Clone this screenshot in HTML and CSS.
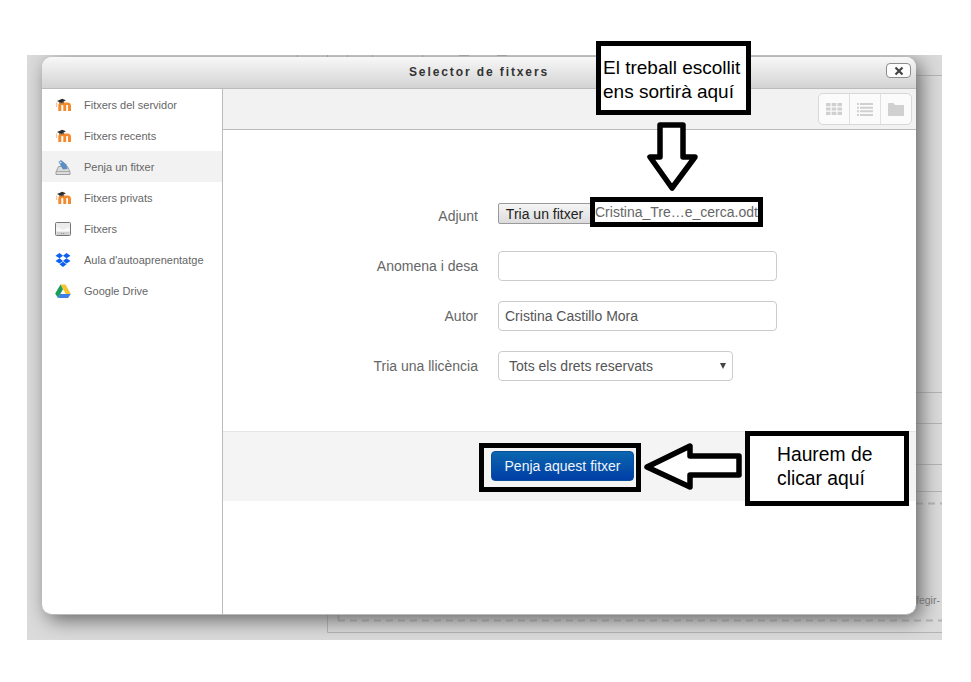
FILE: index.html
```html
<!DOCTYPE html>
<html lang="ca">
<head>
<meta charset="utf-8">
<title>Selector de fitxers</title>
<link rel="stylesheet" href="styles.css">
</head>
<body>
<svg width="0" height="0" class="defs" aria-hidden="true">
  <defs>
    <symbol id="moodle" viewBox="0 0 16 16">
      <path d="M1 5.500h1.200v4.500H1z" fill="#f9c49a"/>
      <path d="M3.300 14V8.500C3.300 6.500 4.800 5.500 6.500 5.500H12.700C14.900 5.500 16 7 16 9V14H13V9.200C13 8.400 12.700 8.100 12 8.100H11.200V14H8.300V9C8.300 8.300 8 8.100 7.300 8.100 6.600 8.100 6.300 8.400 6.300 9.200V14Z" fill="#f58a2c"/>
      <path d="M2 4 7.200 1.700 10.800 3.300 6.500 6 4 5.200 2.500 4.300z" fill="#2e2e2e"/>
      <path d="M4 5.300 6.500 6.200 8.800 4.800 8.800 6.300H4.300z" fill="#4a4a4a"/>
    </symbol>
  </defs>
</svg>
<div class="page">
  <div class="stage">
    <svg class="backdrop" viewBox="0 0 915 585" width="915" height="585" aria-hidden="true">
      <g stroke="#b4b4b4" fill="none">
        <path d="M889 20.500H915M889 337.500H915M889 368.500H915M889 409.500H915M889 436.500H915"/>
        <path d="M300.500 555V577.500H915"/>
        <path d="M311.500 555V565.500" stroke-width="2"/>
        <path d="M889 448.500H915M311 565.500H915" stroke-width="2" stroke-dasharray="7 5"/>
        <path d="M270.500 0V2M300.500 0V2M320.500 0V2M345.500 0V2M395.500 0V2M432 .5H442M470 .5H480M590 .5H610"/>
      </g>
    </svg>
    <span class="peek">fegir-</span>
    <section class="dialog">
      <header class="dialog-head">
        <h1 class="dialog-title">Selector de fitxers</h1>
        <button class="close" type="button" aria-label="Tanca">
          <svg viewBox="0 0 10 10" width="10" height="10"><path d="M1.500 1.500 8.500 8.500M8.500 1.500 1.500 8.500" stroke="#444" stroke-width="2.200" fill="none"/></svg>
        </button>
      </header>
      <div class="dialog-body">
        <nav class="side">
          <a class="side-item"><svg class="ico"><use href="#moodle"/></svg>Fitxers del servidor</a>
          <a class="side-item"><svg class="ico"><use href="#moodle"/></svg>Fitxers recents</a>
          <a class="side-item is-active">
            <svg class="ico" viewBox="0 0 16 16">
              <path d="M3.500 7.500 1 13v2.500h14V13l-2.500-5.500z" fill="#dcdcdc" stroke="#8d8d8d" stroke-width=".8"/>
              <path d="M1.500 12.500h13" stroke="#a8a8a8" stroke-width="1"/>
              <path d="M3.500 3 6 1l5.500 4.500 1 4.500-4.500.5z" fill="#5a8ec4"/>
              <circle cx="5.500" cy="3.500" r="1" fill="#dbe8f5"/>
            </svg>Penja un fitxer</a>
          <a class="side-item"><svg class="ico"><use href="#moodle"/></svg>Fitxers privats</a>
          <a class="side-item">
            <svg class="ico" viewBox="0 0 16 16">
              <rect x=".5" y="1.500" width="15" height="13" rx="1" fill="#ececec" stroke="#777"/>
              <path d="M1.500 6 8 9 14.500 6v4h-13z" fill="#fafafa"/>
              <path d="M1.500 11h13v3h-13z" fill="#cfcfcf"/>
              <path d="M6 12.500h4" stroke="#999" stroke-dasharray="1 1"/>
            </svg>Fitxers</a>
          <a class="side-item">
            <svg class="ico" viewBox="0 0 16 16">
              <path d="M4.500 1 .5 3.700 4.500 6.300 8 3.700zM11.500 1 8 3.700l3.500 2.600 4-2.600zM.5 9 4.500 11.500 8 9 4.500 6.300zM11.500 6.300 8 9l3.500 2.500 4-2.500zM4.500 12.300 8 15l3.500-2.700L8 9.800z" fill="#0d5ff0"/>
            </svg>Aula d'autoaprenentatge</a>
          <a class="side-item">
            <svg class="ico" viewBox="0 0 16 16">
              <path d="M5.500 1.500h5L15.800 11h-5z" fill="#f7c32d"/>
              <path d="M5.500 1.500 8 6.200 3 15 .2 10.500z" fill="#1c9e5a"/>
              <path d="M5 11h10.800L13 15H3z" fill="#3f7fe8"/>
            </svg>Google Drive</a>
        </nav>
        <main class="pane">
          <div class="toolbar">
            <div class="views">
              <span class="view">
                <svg viewBox="0 0 16 14" width="16" height="14"><path d="M0 1h4.500v3.200H0zM5.700 1h4.600v3.200H5.700zM11.500 1H16v3.200h-4.500zM0 5.400h4.500v3.200H0zM5.700 5.400h4.600v3.200H5.700zM11.500 5.400H16v3.200h-4.500zM0 9.800h4.500V13H0zM5.700 9.800h4.600V13H5.700zM11.500 9.800H16V13h-4.500z" fill="#d0d0d0"/></svg>
              </span>
              <span class="view">
                <svg viewBox="0 0 16 14" width="16" height="14"><path d="M0 1h2v2H0zM3 1h13v2H3zM0 4.700h2v2H0zM3 4.700h13v2H3zM0 8.300h2v2H0zM3 8.300h13v2H3zM0 12h2v2H0zM3 12h13v2H3z" fill="#d0d0d0"/></svg>
              </span>
              <span class="view">
                <svg viewBox="0 0 16 14" width="16" height="14"><path d="M0 2c0-.6.400-1 1-1h4.500l1.500 2h8c.6 0 1 .4 1 1v9c0 .6-.4 1-1 1H1c-.6 0-1-.4-1-1z" fill="#d0d0d0"/></svg>
              </span>
            </div>
          </div>
          <form class="form">
            <label class="lbl lbl-file">Adjunt</label>
            <div class="file-row"><button class="file-btn" type="button">Tria un fitxer</button></div>
            <label class="lbl">Anomena i desa</label>
            <input class="field" type="text">
            <label class="lbl">Autor</label>
            <input class="field" type="text" value="Cristina Castillo Mora">
            <label class="lbl">Tria una llicència</label>
            <div class="choice-wrap"><select class="choice"><option>Tots els drets reservats</option></select></div>
          </form>
          <div class="foot">
            <button class="submit" type="button">Penja aquest fitxer</button>
          </div>
        </main>
      </div>
    </section>
  </div>

  <div class="note note-top">El treball escollit<br>ens sortirà aquí</div>
  <div class="note note-file">Cristina_Tre…e_cerca.odt</div>
  <div class="note note-submit"></div>
  <div class="note note-click">Haurem de<br>clicar aquí</div>
  <svg class="arrows" viewBox="0 0 971 682" width="971" height="682" aria-hidden="true">
    <path d="M660 125H683V157H695L672 188 650 157H660z" fill="#fff" stroke="#000" stroke-width="5.500" stroke-linejoin="round"/>
    <path d="M647 467 690 446V456H739V475H690V487z" fill="#fff" stroke="#000" stroke-width="5.500" stroke-linejoin="round"/>
  </svg>
</div>
</body>
</html>
```
FILE: styles.css
```css
* { box-sizing: border-box; }
html, body { margin: 0; padding: 0; background: #fff; }
body { font-family: "Liberation Sans", Arial, sans-serif; color: #555; overflow: hidden; }
.defs { position: absolute; }
.page { position: relative; width: 971px; height: 682px; padding: 55px 29px 42px 27px; }

.stage { position: relative; isolation: isolate; width: 915px; height: 585px; background: #dbdbdb; overflow: hidden; }
.backdrop { position: absolute; left: 0; top: 0; }
.peek { position: absolute; left: 889px; top: 539px; font-size: 10.500px; color: #777; }

.dialog {
  position: absolute; left: 15px; top: 2px; width: 874px; height: 558px;
  display: flex; flex-direction: column;
  background: #fff; border-radius: 10px;
  box-shadow: 5px 5px 20px 0 #666;
  border-bottom: 1px solid #bbb;
  z-index: 1;
}
.dialog-head {
  position: relative; flex: none; height: 32px;
  display: flex; align-items: center; justify-content: center;
  border-radius: 10px 10px 0 0;
  border-bottom: 1px solid #bbb;
  background: linear-gradient(#f8f8f8, #d3d3d3);
}
.dialog-title { margin: 0; font-size: 12px; font-weight: bold; letter-spacing: 1.9px; color: #333; padding-bottom: 2px; }
.close {
  position: absolute; right: 5px; top: 6px; width: 25px; height: 15px; padding: 0;
  display: flex; align-items: center; justify-content: center;
  background: #fdfdfd; border: 1px solid #8c8c8c; border-radius: 4px;
}

.dialog-body { flex: 1; display: flex; min-height: 0; }
.side { flex: none; width: 181px; border-right: 1px solid #bbb; }
.side-item { display: flex; align-items: center; gap: 13px; height: 31px; padding: 0 0 0 13px; font-size: 11px; color: #666; }
.side-item.is-active { background: #f2f2f2; }
.ico { width: 16px; height: 16px; flex: none; }

.pane { flex: 1; min-width: 0; display: flex; flex-direction: column; }
.toolbar { flex: none; height: 41px; padding: 4px 4px 0 0; display: flex; justify-content: flex-end; align-items: flex-start; background: #f2f2f2; border-bottom: 1px solid #bbb; }
.views { display: flex; width: 94px; height: 32px; background: #fbfbfb; border: 1px solid #d8d8d8; border-radius: 5px; }
.view { flex: 1; display: flex; align-items: center; justify-content: center; border-left: 1px solid #e0e0e0; }
.view:first-child { border-left: 0; }

.form {
  display: grid; grid-template-columns: 255px max-content;
  column-gap: 20px; row-gap: 20px; align-items: center;
  grid-template-rows: 28px 30px 30px 30px; justify-content: start;
  padding-top: 73px;
}
.lbl { text-align: right; font-size: 14px; color: #666; }
.lbl-file { padding-bottom: 2px; }
.file-row { height: 28px; }
.file-btn {
  width: 93px; height: 21px; padding: 0; display: block;
  font: 14px "Liberation Sans", Arial, sans-serif; color: #222;
  background: linear-gradient(#f5f5f5, #dcdcdc); border: 1px solid #999; border-radius: 2px 0 0 2px;
}
.field {
  width: 279px; height: 30px; padding: 0 6px;
  font: 14px "Liberation Sans", Arial, sans-serif; color: #555;
  background: #fff; border: 1px solid #ccc; border-radius: 4px;
}
.choice-wrap { position: relative; width: 235px; height: 30px; }
.choice-wrap::after {
  content: ""; position: absolute; right: 7px; top: 12px;
  border-left: 3px solid transparent; border-right: 3px solid transparent; border-top: 6px solid #444;
}
.choice {
  display: block; width: 235px; height: 30px; padding: 0 10px;
  appearance: none; -webkit-appearance: none;
  font: 14px "Liberation Sans", Arial, sans-serif; color: #555;
  background: #fff; border: 1px solid #ccc; border-radius: 4px;
}

.foot {
  flex: none; height: 70px; margin-top: 50px; padding: 19px 0 0 268px;
  background: #f4f4f4; border-top: 1px solid #e5e5e5;
}
.submit {
  display: block; width: 143px; height: 30px; padding: 0;
  font: 14px "Liberation Sans", Arial, sans-serif; color: #f0f5fb;
  background: linear-gradient(#0a66ae, #003ea6); border: 1px solid #0a4f9c; border-radius: 4px;
}

.note { position: absolute; background: #fff; border: 5px solid #000; color: #000; }
.note-top { left: 596px; top: 41px; width: 155px; height: 74px; padding: 10px 0 0 2px; font-size: 19px; line-height: 24px; white-space: nowrap; }
.note-file { left: 590px; top: 197px; width: 173px; height: 30px; padding: 0; font-size: 14px; line-height: 20px; color: #666; white-space: nowrap; overflow: hidden; }
.note-submit { left: 479px; top: 443px; width: 162px; height: 49px; background: transparent; }
.note-click { left: 745px; top: 431px; width: 164px; height: 75px; padding: 7px 0 0 27px; font-size: 19.300px; line-height: 24px; }
.arrows { position: absolute; left: 0; top: 0; pointer-events: none; }
```
